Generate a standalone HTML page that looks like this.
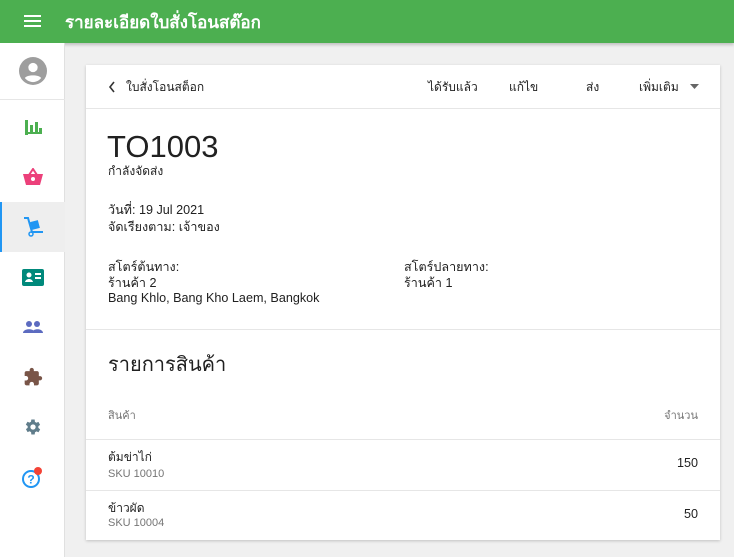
<!DOCTYPE html>
<html><head><meta charset="utf-8"><style>
*{margin:0;padding:0;box-sizing:border-box}
body{width:734px;height:557px;background:#f0f0f0;font-family:"Liberation Sans",sans-serif;color:#212121;position:relative;overflow:hidden}
.top{position:absolute;left:0;top:0;width:734px;height:43px;background:#4caf50;box-shadow:0 2px 3px rgba(0,0,0,.2)}
.top .t{position:absolute;left:65px;top:9px;color:#fff;font-size:17px;font-weight:bold}
.side{position:absolute;left:0;top:43px;width:65px;height:514px;background:#fff;border-right:1px solid #e0e0e0}
.ic{position:absolute;left:0;width:65px;height:50px;display:flex;align-items:center;justify-content:center}
.card{position:absolute;left:86px;top:65px;width:634px;height:475px;background:#fff;box-shadow:0 1px 3px rgba(0,0,0,.2)}
.a{position:absolute;font-size:12px;white-space:nowrap}
.b{font-size:12.6px}
.hr{position:absolute;left:0;width:634px;height:1px;background:#e6e6e6}
</style></head><body>
<div class="top">
<svg style="position:absolute;left:24px;top:14px" width="17" height="14"><rect y="1" width="17" height="2" fill="#fff"/><rect y="6" width="17" height="2" fill="#fff"/><rect y="11" width="17" height="2" fill="#fff"/></svg>
<div class="t">รายละเอียดใบสั่งโอนสต๊อก</div></div>
<div class="side">
<div class="ic" style="top:4px;height:48px"><svg width="28" height="28" viewBox="0 0 24 24"><circle cx="12" cy="12" r="12" fill="#9e9e9e"/><circle cx="12" cy="9" r="4" fill="#fff"/><path d="M5 18c2-3 12-3 14 0c-2 2.5-5 3.5-7 3.5s-5-1-7-3.5z" fill="#fff"/></svg></div>
<div style="position:absolute;left:0;top:56px;width:65px;height:1px;background:#e6e6e6"></div>
<div class="ic" style="top:59px"><svg width="18" height="16"><rect x="1" y="1" width="3" height="15" fill="#4caf50"/><rect x="6" y="6" width="3" height="9" fill="#4caf50"/><rect x="11" y="3" width="3" height="12" fill="#4caf50"/><rect x="15" y="9" width="3" height="6" fill="#4caf50"/><rect x="1" y="13" width="17" height="2" fill="#4caf50"/></svg></div>
<div class="ic" style="top:109px"><svg width="20" height="18" viewBox="0 0 20 18"><path d="M6 7L10 1L14 7" stroke="#ec407a" stroke-width="2" fill="none"/><path d="M0 6h20l-3 11H3z" fill="#ec407a"/><circle cx="10" cy="11" r="2" fill="#fff"/></svg></div>
<div class="ic" style="top:159px;background:#eee;border-left:2px solid #2196f3"><svg width="22" height="20" viewBox="0 0 22 20"><path d="M1 1h4l4 14h11" stroke="#2196f3" stroke-width="2" fill="none"/><rect x="8" y="4" width="8" height="8" fill="#2196f3" transform="rotate(-15 12 8)"/><circle cx="8" cy="17" r="2" stroke="#2196f3" stroke-width="1.5" fill="none"/></svg></div>
<div class="ic" style="top:209px"><svg width="22" height="17"><rect width="22" height="17" rx="2" fill="#00897b"/><circle cx="7" cy="6" r="2.5" fill="#fff"/><path d="M3 13c1-4 7-4 8 0z" fill="#fff"/><rect x="13" y="4" width="6" height="2" fill="#fff"/><rect x="13" y="8" width="6" height="2" fill="#fff"/></svg></div>
<div class="ic" style="top:259px"><svg width="20" height="12"><circle cx="6" cy="3" r="3" fill="#5c6bc0"/><circle cx="14" cy="3" r="3" fill="#5c6bc0"/><path d="M0 12c0-5 12-5 12 0z M9 12c0-5 11-5 11 0z" fill="#5c6bc0"/></svg></div>
<div class="ic" style="top:309px"><svg width="20" height="20" viewBox="0 0 24 24"><path d="M20.5 11H19V7c0-1.1-.9-2-2-2h-4V3.5a2.5 2.5 0 00-5 0V5H4c-1.1 0-2 .9-2 2v3.8h1.5c1.5 0 2.7 1.2 2.7 2.7S5 16.2 3.5 16.2H2V20c0 1.1.9 2 2 2h3.8v-1.5c0-1.5 1.2-2.7 2.7-2.7s2.7 1.2 2.7 2.7V22H17c1.1 0 2-.9 2-2v-4h1.5a2.5 2.5 0 000-5z" fill="#795548"/></svg></div>
<div class="ic" style="top:359px"><svg width="20" height="20" viewBox="0 0 24 24"><path d="M19.4 13a7.5 7.5 0 000-2l2.1-1.6-2-3.5-2.5 1a7 7 0 00-1.7-1L15 3h-4l-.4 2.7a7 7 0 00-1.7 1l-2.5-1-2 3.5L6.6 11a7.5 7.5 0 000 2l-2.1 1.6 2 3.5 2.5-1a7 7 0 001.7 1L11 21h4l.4-2.7a7 7 0 001.7-1l2.5 1 2-3.5z" fill="#607d8b" transform="translate(-1 0)"/><circle cx="12" cy="12" r="3.2" fill="#fff"/></svg></div>
<div class="ic" style="top:409px"><svg width="24" height="24" viewBox="0 0 24 24"><circle cx="10" cy="14" r="8" stroke="#2196f3" stroke-width="2" fill="none"/><text x="10" y="18.5" font-size="12" font-weight="bold" fill="#2196f3" text-anchor="middle" font-family="Liberation Sans">?</text><circle cx="17" cy="6" r="4" fill="#f44336"/></svg></div>
</div>
<div class="card">
<svg style="position:absolute;left:22px;top:16px" width="8" height="12"><path d="M6 1L2 6l4 5" stroke="#333" stroke-width="1.6" fill="none"/></svg>
<div class="a" style="left:40px;top:13px">ใบสั่งโอนสต็อก</div>
<div class="a" style="left:342px;top:13px">ได้รับแล้ว</div>
<div class="a" style="left:423px;top:13px">แก้ไข</div>
<div class="a" style="left:500px;top:13px">ส่ง</div>
<div class="a" style="left:553px;top:13px">เพิ่มเติม</div>
<svg style="position:absolute;left:604px;top:19px" width="10" height="5"><path d="M0 0h9L4.5 5z" fill="#666"/></svg>
<div class="hr" style="top:43px"></div>
<div class="a" style="left:21px;top:64px;font-size:31px">TO1003</div>
<div class="a" style="left:22px;top:97px">กำลังจัดส่ง</div>
<div class="a b" style="left:22px;top:135px">วันที่: 19 Jul 2021</div>
<div class="a b" style="left:22px;top:152px">จัดเรียงตาม: เจ้าของ</div>
<div class="a b" style="left:22px;top:192px">สโตร์ต้นทาง:</div>
<div class="a b" style="left:22px;top:208px">ร้านค้า 2</div>
<div class="a b" style="left:22px;top:226px">Bang Khlo, Bang Kho Laem, Bangkok</div>
<div class="a b" style="left:318px;top:192px">สโตร์ปลายทาง:</div>
<div class="a b" style="left:318px;top:208px">ร้านค้า 1</div>
<div class="hr" style="top:264px"></div>
<div class="a" style="left:22px;top:283px;font-size:20px">รายการสินค้า</div>
<div class="a" style="left:22px;top:341px;font-size:11px;color:#757575">สินค้า</div>
<div class="a" style="right:22px;top:341px;font-size:11px;color:#757575">จำนวน</div>
<div class="hr" style="top:374px"></div>
<div class="a" style="left:22px;top:383px">ต้มข่าไก่</div>
<div class="a" style="left:22px;top:403px;font-size:11px;color:#757575">SKU 10010</div>
<div class="a b" style="right:22px;top:391px">150</div>
<div class="hr" style="top:425px"></div>
<div class="a" style="left:22px;top:434px">ข้าวผัด</div>
<div class="a" style="left:22px;top:452px;font-size:11px;color:#757575">SKU 10004</div>
<div class="a b" style="right:22px;top:442px">50</div>
</div>
</body></html>
